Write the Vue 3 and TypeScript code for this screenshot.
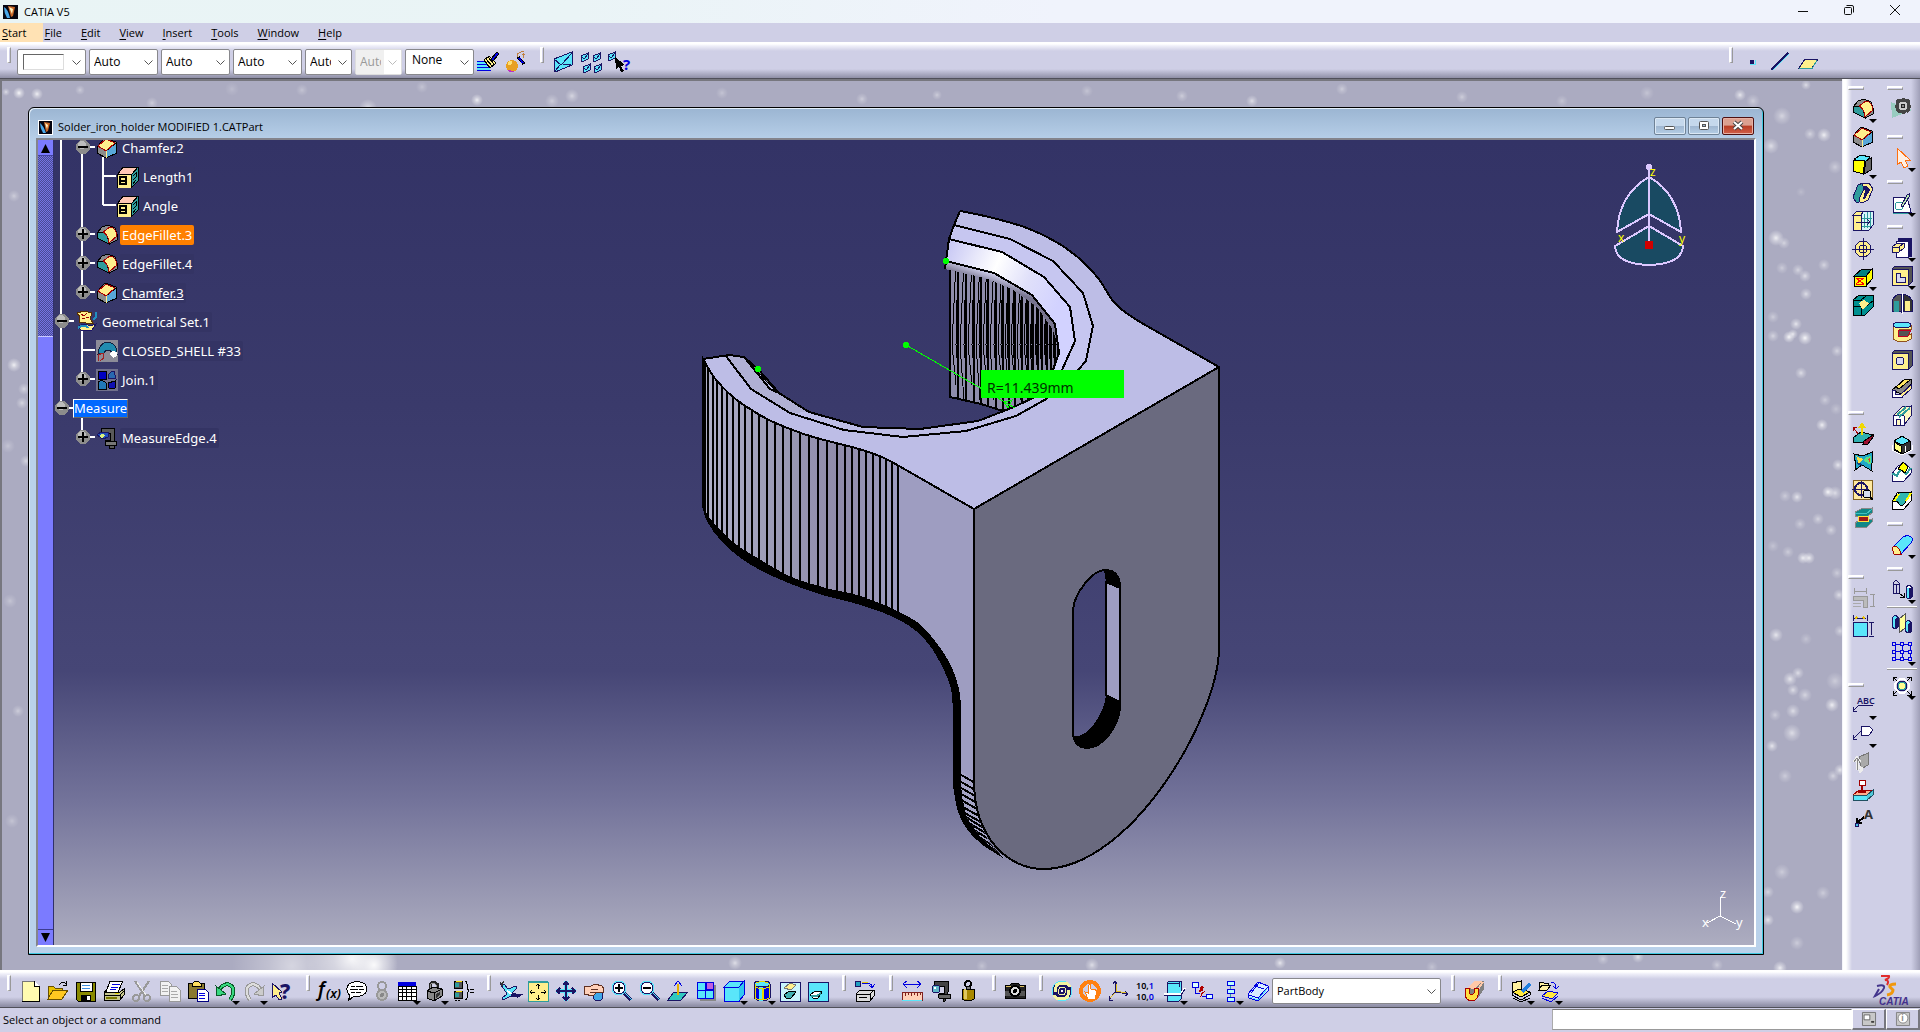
<script setup lang="ts">
interface Tool { n: string; icon: string; drop?: boolean; tight?: boolean; off?: boolean }
interface Combo { id: string; label: string; value: string; cls: string; disabled?: boolean }
interface Row { level: number; icon?: string; text: string; node: 'plus' | 'minus' | 'none'; trunk: boolean; last?: boolean; open?: boolean; mark?: string }

const N = '#1a1464'
const K = '#000'
const Y = '#ffef8c'
const C = '#5ae6fa'
const T = '#2f9c9c'
const B = '#0000e0'

const p = (d: string, fill = 'none', stroke = 'none', w = 1): string =>
  `<path d="${d}" fill="${fill}" stroke="${stroke}" stroke-width="${w}"/>`
const c = (x: number, y: number, r: number, fill = 'none', stroke = 'none', w = 1): string =>
  `<circle cx="${x}" cy="${y}" r="${r}" fill="${fill}" stroke="${stroke}" stroke-width="${w}"/>`
const t = (x: number, y: number, size: number, s: string, fill = K, extra = ''): string =>
  `<text x="${x}" y="${y}" font-size="${size}" fill="${fill}" font-family="Noto Sans, sans-serif" ${extra}>${s}</text>`

const fillet = p('M1 9L6 3L12 1L19 4L21 10V16L13 20L1 14Z', '#8c8c8c', K) + p('M1 9L7 8Q12 10 13 20L1 14Z', T, K) + p('M7 8L14 3Q20 4 21 12L13 19Q12 10 7 8Z', Y, '#a80000')
const chamfer = p('M1 10L9 1L20 5L21 16L10 21L1 16Z', '#8c8c8c', K) + p('M10 14L20 6L21 16L10 21Z', '#58a8d8', K) + p('M2 9L10 2L19 6L10 14Z', Y, '#a80000') + p('M10 14V21', 'none', Y, 1)
const param = p('M1 8L6 1H21V15L15 21', T, K) + p('M1 8L6 1H21L15 8Z', '#ffc8b4', K) + p('M0 8H14V22H0Z', Y, K) + p('M3 11H9V18H3ZM3 14.500H10', 'none', K, 2) + p('M16 10L19 7V11L16 14M16 18L19 14', 'none', K, 1)
const mini = (x: number, y: number): string => p(`M${x} ${y + 3}L${x + 7} ${y}V${y + 6}L${x + 1} ${y + 9}Z`, C, N) + p(`M${x + 1} ${y + 4}L${x + 3} ${y + 6}L${x + 7} ${y + 1}`, 'none', N)

const icons: Record<string, string> = {
  fillet, chamfer, param,
  brush: p('M0 10H9M0 13H11M0 16H13M0 19H14', 'none', B, 1) + p('M0 12H9M0 15H10M0 18H13', 'none', C, 2) + p('M7 9L12 5L19 12L13 17Z', Y, K) + p('M14 8L20 1L22 3L16 10Z', B, K) + p('M9 8L15 15M11 6L17 13', 'none', K),
  wand: c(7, 15, 6, '#e8a020') + p('M2 19Q7 24 12 18L9 20Z', '#c030c0') + c(5, 12, 2, '#ffe070') + p('M13 6L19 13', 'none', K, 3) + p('M14 7L18 12', 'none', B, 2) + p('M12 3L16 1L19 0M17 4L20 3M18 7L19 2M12 6V3', 'none', '#c08040', 1),
  view3d: p('M2 8L20 1V14L3 21Z', C, N) + p('M2 8L9 14L20 2M9 13L3 20M11 13L19 14', 'none', N),
  four: mini(1, 2) + mini(13, 2) + mini(3, 13) + mini(14, 13),
  what: mini(0, 1) + p('M7 6L17 14L13 15L16 20L13 21L11 16L8 18Z', K) + t(15, 19, 15, '?', B, 'font-weight="700"'),
  point: p('M9 9H13V13H9Z', N) + p('M9 13.5H14V9', 'none', C),
  line: p('M2 19L19 2', 'none', N, 2) + p('M4 19L20 3', 'none', C),
  plane: p('M2 17L8 8H21L15 17Z', Y, N) + p('M2 17.5H15L20 9', 'none', T),
  newdoc: p('M3 1H15L20 6V21H3Z', '#fffbb0', '#777') + p('M15 1V6H20', '#fff', K) + p('M20 6V21H3', 'none', K),
  open: p('M1 18V6H6L8 8H15V11', '#e8c000', '#6a5000') + p('M1 19L6 10H21L15 19Z', '#ffc820', '#6a5000') + p('M12 5Q16 0 19 4M19 1V5H16', 'none', K),
  save: p('M1 2H20V21H3L1 19Z', '#8a8a00', K) + p('M5 2H17V11H5Z', '#fff', K) + p('M7 5H15M7 8H15', 'none', '#4090e0') + p('M6 15H16V21H6Z', K) + p('M12 16H15V20H12Z', '#fff'),
  print: p('M7 1H20L15 12H3Z', '#fff', K) + p('M9 4H17M8 7H15M7 9H13', 'none', B) + p('M1 12H17L21 9V15L17 20H1Z', '#c8c890', K) + p('M1 12L4 10M1 15H17V20M17 15L21 11', 'none', K) + p('M3 18H14', 'none', '#7a7a00', 2) + p('M12 13.5H16', 'none', '#e0d000', 1),
  cut: p('M4 1L14 16M18 1L8 16', 'none', '#999', 2) + c(5, 18, 3, 'none', '#999', 2) + c(16, 18, 3, 'none', '#999', 2) + p('M6 2L15 15', 'none', '#eee'),
  copy: p('M1 1H9L12 4V15H1Z', '#f2f2f2', '#999') + p('M3 5H9M3 8H9M3 11H9', 'none', '#aaa') + p('M10 6H17L21 10V21H10Z', '#f2f2f2', '#999') + p('M12 11H18M12 14H19M12 17H19', 'none', '#aaa'),
  paste: p('M1 3H17V18H1Z', '#8a7a30', K) + p('M5 4L8 1H11L14 4V6H5Z', '#ffe060', K) + p('M10 9H18L21 12V21H10Z', '#fff', '#000080') + p('M12 13H18M12 15.5H18M12 18H18', 'none', B),
  undo: p('M3 12Q8 2 15 5Q22 9 15 20', 'none', '#0a5a28', 4) + p('M3 12Q8 2 15 5Q22 9 15 20', 'none', '#38d880', 2) + p('M1 6L2 16L11 14Z', '#38d880', '#0a5a28'),
  redo: p('M19 12Q14 2 7 5Q0 9 7 20', 'none', '#999', 4) + p('M19 12Q14 2 7 5Q0 9 7 20', 'none', '#ddd', 2) + p('M21 6L20 16L11 14Z', '#ccc', '#999'),
  help: p('M1 3L11 12L8 13L11 19L8 20L5 15L1 18Z', Y, N) + t(9, 19, 21, '?', N, 'font-weight="800"'),
  fx: t(0, 16, 19, 'f', K, 'font-style="italic" font-weight="600"') + t(8, 18, 13, '(x)', K, 'font-style="italic" font-weight="600"'),
  bubble: p('M4 16Q-2 9 3 4Q11 -1 19 4Q24 11 17 15Q13 17 8 16L2 21Z', '#fff', K) + p('M5 6H9M10 6H17M4 9H12M13 9H18M5 12H9M10 12H15', 'none', K),
  chain: c(11, 6, 4, 'none', '#999', 2) + c(11, 15, 5, '#bbb', '#999', 2) + c(11, 15, 2, '#888'),
  grid: p('M2 2H20V6H2Z', B) + p('M2 6H20V20H2Z', '#fff', K) + p('M6.5 6V20M10.5 6V20M15.5 6V20M2 9.5H20M2 12.5H20M2 16.5H20', 'none', K),
  lock: p('M6 10V5Q9 0 13 4V10', 'none', '#222', 3) + p('M6 10V5Q9 1 12 5V10', 'none', '#999', 1) + p('M3 11L9 7L18 9V16L10 21L3 18Z', '#888', K) + p('M3 11L10 13V21M10 13L18 9', 'none', K) + p('M12 14L16 12V15L12 18Z', '#333'),
  equiv: p('M2 1H10V8H2ZM2 11H10V18H2Z', '#555', K) + p('M3 3H7V7H3ZM3 13H7V17H3Z', T) + p('M4 1H10M4 11H10', 'none', '#ffe000') + p('M3 20.5H5M6 20.5H8', 'none', K) + p('M13 1Q15 1 15 4V8L17 11L15 13V18Q15 20 13 20', 'none', K) + p('M18 9.500H22M18 12.500H22', 'none', K),
  fly: p('M1 4L5 4L9 9L17 6L18 8L13 13L21 15L18 17L12 16L4 20L3 18L8 14L5 9Z', C, N) + p('M8 11L13 14', 'none', '#fff', 2) + p('M1 2L4 6M5 1L2 6', 'none', '#333') + p('M12 15L21 15L18 17', 'none', N, 2),
  fit: p('M1 2H21V21H1Z', Y, T) + p('M1 2H21', 'none', T, 2) + p('M11 4V9M9 6L11 4L13 6M11 20V15M9 18L11 20L13 18M3 12H8M5 10L3 12L5 14M19 12H14M17 10L19 12L17 14', 'none', K, 1),
  pan: p('M11 1V21M1 11H21', 'none', C, 4) + p('M11 1V21M1 11H21M8 5L11 2L14 5M8 17L11 20L14 17M5 8L2 11L5 14M17 8L20 11L17 14', 'none', N, 2),
  rotate: c(15, 16, 5, '#40a8e8', N) + p('M1 7L8 6L12 4L19 6L21 9L20 13L14 12L10 16L1 14Z', '#ffd0b8', '#603020') + p('M8 9H15M7 12H13M1 7V15', 'none', '#603020'),
  zoomin: p('M12 12L20 20', 'none', N, 4) + p('M13 12L21 20', 'none', C) + c(8, 8, 7, '#fff', C, 1) + c(8, 8, 6, '#fff', N, 1) + p('M4 8H12M8 4V12', 'none', K, 2),
  zoomout: p('M12 12L20 20', 'none', N, 4) + p('M13 12L21 20', 'none', C) + c(8, 8, 7, '#fff', C, 1) + c(8, 8, 6, '#fff', N, 1) + p('M4 8H12', 'none', K, 2),
  normal: p('M1 20L7 12H21L14 20Z', '#30c8c0', N) + p('M11 15V4', 'none', '#e8b000', 2) + p('M7 6L11 1L15 6', 'none', B),
  multi: p('M5 5H21V21H5Z', '#888') + p('M2 2H18V18H2Z', C, B) + p('M11 2H18V9H11Z', '#c060e0', B) + p('M10 2V18M2 10H18', 'none', B),
  iso: p('M1 7L7 1H21L16 7Z', C, B) + p('M1 7H16V21H1Z', C, B) + p('M16 7L21 1V15L16 21', '#30c8f0', B),
  shading: p('M3 4H19V18Q11 24 3 18Z', B, N) + p('M8 7H12V21H8Z', C) + `<ellipse cx="11" cy="4" rx="8" ry="3" fill="${C}" stroke="${N}"/>` + p('M4 4V18M18 4V18M5 3Q11 0 17 3M4 7Q11 10 18 7M4 18Q11 22 18 18', 'none', '#e8d800', 1) + p('M12 9V20', 'none', '#e8d800', 2),
  hide: p('M1 2H21V21H1Z', '#c8f4fc', N, 1) + p('M5 8L11 3L17 5L12 10Z', Y, '#777') + p('M5 15L10 11L17 12L12 18H7Z', '#40b0b0', K),
  swap: p('M1 2H21V21H1Z', C, N, 1) + p('M3 15L8 11L15 12L11 18H6Z', '#fff', K) + p('M4 16H10L14 13', 'none', T, 2),
  applymat: c(4, 4, 3, '#20a0c0', N) + p('M8 3H14Q18 4 18 7M15 5L18 8L21 4', 'none', B) + p('M8 2H14', 'none', '#e8c800', 1) + p('M2 14L6 10H20V16L16 21H2ZM2 14H16V21M16 14L20 10M5 17H13', '#ddd', K),
  ruler: p('M2 4H20M6 1L2 4L6 8M16 1L20 4L16 8', 'none', B) + p('M1 12H21V20H1Z', '#ffd0b8', '#802020') + p('M4 12V16M7 12V15M10 12V16M13 12V15M16 12V16M19 12V15', 'none', '#802020') + p('M1 20.500H21', 'none', C),
  caliper: p('M5 1H19V12L16 21H14V16H10V13H15V6H5Z', '#444', K) + p('M9 14H21V18H10Z', '#666', K) + c(7, 9, 4, '#60b8c8', N) + c(6, 8, 1, '#fff'),
  weight: p('M5 9H17V19Q11 23 5 19Z', '#a88800', K) + p('M7 9H10V19H7Z', '#e0c860') + c(11, 4, 3, 'none', K, 2) + p('M9 6H13V9H9Z', '#777', K),
  camera: p('M1 5H6L8 3H14L16 5H21V18H1Z', '#222', K) + p('M1 11H21V16H1Z', '#555') + c(11, 11, 5, '#ddd', K, 2) + c(11, 11, 2, K) + p('M2 6.500H7M16 6.500H20', 'none', '#ddc060'),
  update: c(11, 11, 10, N, C) + p('M5 12Q3 3 12 3Q17 3 19 7M17 10Q19 19 10 19Q5 19 3 15', 'none', '#f4f4a0', 3) + p('M15 11Q15 7 11 7Q7 7 8 11M7 11Q7 15 11 15Q15 15 14 11', 'none', '#f4f4a0', 1) + p('M10 11H12', 'none', '#fff', 2),
  manip: c(11, 11, 9, 'none', '#ff8010', 4) + p('M9 6V13L6 12L9 19H16L18 12L16 9L14 10L12 9L11 4Z', '#fff', '#ff8010'),
  axis: p('M8 1V12L21 14M8 12L2 20M6 4L8 1L10 4M18 11L21 14L18 16M2 16V20H6', 'none', N) + p('M9 4V11L19 13M8 13L3 18', 'none', '#e0c020'),
  meandim: t(1, 9, 9, '10,<tspan fill="#0000e0">1</tspan>', K, 'font-weight="600"') + t(1, 20, 9, '10,<tspan fill="#0000e0">0</tspan>', K, 'font-weight="600"'),
  section: p('M4 3L6 1H18V19L16 21H4Z', C, N) + p('M1 14H18L22 8', 'none', '#fff', 2) + p('M4 3H16L18 1M1 15H18L22 9M16 3V7', 'none', N),
  cutlink: p('M1 2H7V7H1ZM15 14H21V18H15Z', '#dff', B) + p('M4 8V13H9M11 16H15', 'none', B) + p('M10 6L8 12L11 11L9 18L14 11L11 12L13 7Z', '#b00000'),
  listpb: p('M8 1H15V5H8ZM8 9H15V13H8ZM8 17H15V21H8Z', '#bff', B) + p('M11.500 6V9M11.500 14V17', 'none', T),
  body: p('M1 14L11 2L21 6V11L11 21L2 18Z', '#d8ecff', B) + p('M2 15L11 18L21 7M4 13L12 3M8 6L17 9M11 18V21', 'none', B) + p('M3 17L11 20L20 9', 'none', C),
  rib: p('M6 9L13 1H21V9L15 18H6Z', '#808080') + p('M4 8L12 1H19L11 9Z', '#ffc8a8') + p('M15 9L20 2', 'none', '#ffc8a8', 2) + p('M2 8H6V13Q8 16 11 13V8H15V15Q14 21 8 21Q3 20 2 15Z', '#ffe040', '#a80000', 1),
  catalog: p('M2 3L11 1V9L2 12Z', '#fff0a0', K) + p('M2 12L10 9L20 12L11 17Z', '#ffe840', K) + p('M2 15L11 20L20 15M2 12V15M20 12V15M3 18L11 22L20 18', 'none', K) + p('M12 12L20 4', 'none', '#2080e0', 3),
  folderlink: p('M1 10V2H5L6 3H10V5M1 10L4 5H13L9 10Z', '#fff0a0', K) + p('M13 2Q18 2 18 8M15 6L18 9L21 6', 'none', B) + p('M4 16L10 11L20 13L14 19Z', '#ffe840', B) + p('M4 18L13 22L20 16', 'none', B),
  draft: p('M2 5L9 1L18 3L15 7L6 8Z', C, K) + p('M2 6L13 7L11 20L1 17Z', '#ffff00', K) + p('M14 7L19 4V16L12 20Z', '#666', K),
  shell: p('M1 15L6 3L11 1L13 4L7 20H4Z', T, N) + p('M10 1H17L21 7L16 18L12 20H8L7 17L12 7Z', Y, N) + p('M11 4H15L18 8L13 17H11L13 9Z', N),
  thick: p('M1 5H9V20H1Z', Y, N) + p('M1 5L5 1H12L9 5Z', Y, N) + p('M9 5L12 1H21V15L17 20H9Z', '#d8f4fa', N) + p('M12 4V18M15 2V18M18 2V17M10 8H20M10 16H19', 'none', T, 1) + p('M4 12H18M15 9L18 12L15 15', 'none', N),
  target: c(11, 11, 8, Y, N, 1) + c(11, 11, 4, 'none', N) + p('M11 0V22M0 11H22', 'none', N),
  remface: p('M2 10L10 3H20L14 10Z', '#008080', K) + p('M14 10L20 3V13L14 20Z', '#ffff00', K) + p('M2 10H14V20H2Z', '#ffff00', K) + p('M4 12H12M4 18H12M4 12L12 18M12 12L4 18', 'none', '#f00', 1),
  repface: p('M1 6L7 1H21V13L13 21H1Z', '#009090', K) + p('M1 6H9V12H1M9 12V21M14 12L21 7M9 6L14 2', 'none', K) + p('M7 9L12 6L17 9L12 15H10Z', Y),
  draftan: p('M1 15L9 9L21 12L15 20L1 19Z', '#30b0b0', K) + p('M12 18L21 12V14L16 21H11Z', '#a01030', K) + p('M10 12V2M7 5L10 1L13 5', 'none', '#f0d800', 2) + p('M6 11L1 4M1 8V4H5', 'none', '#a00000'),
  curvan: p('M2 3L11 5L20 1V12Q19 17 20 20L10 14L3 19Q4 11 2 3Z', '#20a8c8', K) + p('M4 5L11 8L7 13Z', '#ffe040') + p('M14 6L19 5V13Q15 13 12 9Z', '#60e080') + p('M16 8L18 7V12Z', '#e04020') + p('M5 12L10 14', 'none', '#104080', 2),
  tapan: p('M1 1H20V20H1Z', '#ffe9a0', '#806020') + c(9, 10, 6, 'none', N, 2) + p('M0 10H17M9 2V19', 'none', N) + c(15, 15, 4, '#d8e0f0', K) + p('M18 18L21 21', 'none', K, 2),
  wallan: p('M3 5L9 2L20 1V6L16 9H3ZM3 16L8 13L20 12V15L15 20H3Z', '#108888', '#888') + p('M6 9H16V14H6Z', '#a01818', '#ffe040', 1) + p('M3 6L14 7L20 2', 'none', '#40c0c0'),
  constoff: p('M2 4H14M2 1V7M14 1V7M21 7V19M18 7H23M18 19H23', 'none', '#999') + p('M1 9H15V20H11V13H1Z', '#bbb', '#999') + p('M1 16H9M1 19H9', 'none', '#aaa'),
  constr: p('M1 7H15V21H1Z', C, N, 1) + p('M2 3H14M1 0V6M15 0V6M19 8V20M17 7H22M17 21H22', 'none', N) + p('M3 4L5 2M13 4L11 2', 'none', '#e8c000', 2),
  abc: t(5, 9, 9, 'ABC', N, 'font-weight="600"') + p('M6 10.500H21M6 11L1 16M1 12V16H5', 'none', N),
  flagnote: p('M9 3H17L21 7L17 12H9Z', '#fff', N) + p('M9 8L1 16M1 12V16H5', 'none', N),
  noteface: p('M7 6L16 2V14L9 18Z', '#aaa', '#777') + p('M5 19V8M2 11L5 7L8 11M5 14L10 18M7 21L11 18', 'none', '#eee', 3) + p('M5 19V8M2 11L5 7L8 11', 'none', '#888'),
  stamp: p('M1 16L7 11H21L15 18H1Z', '#ffb090', '#a00000') + p('M1 16H15V21H1Z', C, '#205060') + p('M15 16L21 11V16L15 21', '#50c8d8', '#205060') + p('M7 1H13V6H7Z', '#fff', '#a00000', 1) + p('M10 6V12M6 13H14', 'none', '#a00000', 2),
  textlead: t(12, 12, 13, 'A', '#333', 'font-weight="700"') + p('M12 10L6 15M5 11V16H10', 'none', K, 2) + p('M3 16H6V19H3Z', '#40c0e0', N),
  gear: p('M0 4L21 12L1 20Z', '#98ccc0') + c(12, 8, 6, '#ccc', '#444', 3) + c(12, 8, 2, '#888', '#222') + p('M12 0V2M12 14V16M4 8H6M18 8H20M6 2L8 4M16 12L18 14M18 2L16 4M6 14L8 12', 'none', '#444', 3),
  select: p('M6 1V18L10 15L13 21L17 19L14 13H19Z', '#fff0e4', '#ff7010'),
  sketch: p('M2 5H16L20 20H2Z', '#fff', N) + c(8, 14, 4, 'none', T) + p('M10 14L16 3L18 2L18 5L12 15Z', '#b8e8b0', N) + p('M2 21H21', 'none', T),
  pad: p('M7 1H21V20H7Z', N) + p('M5 4H17V20H5Z', '#fff', N) + p('M1 10L6 6H13V11L8 15H1Z', Y, N) + p('M1 10H8V15M8 10L13 6', 'none', N),
  pocket: p('M1 4L4 1H21V17L18 20H1Z', '#555', N) + p('M1 4H17V20H1Z', Y, N) + p('M5 8H9V12H14V17H5Z', '#d8d8f0', N, 1),
  shaft: p('M1 7Q5 1 10 1V19L1 18Z', '#555', N) + p('M12 1Q18 2 21 7V18H12Z', '#333', N) + p('M3 8H8V19H3Z', T) + p('M14 8H19V18H14Z', Y) + p('M11 0V21', 'none', '#fff', 1),
  groove: p('M2 4V18Q11 24 20 18V13L14 15H8V8H20V4Z', Y, '#905020') + `<ellipse cx="11" cy="4" rx="9" ry="3" fill="${C}" stroke="${N}"/>` + p('M7 9H20L17 15H7Z', '#555', '#c00020'),
  hole: p('M1 4L4 1H21V17L18 20H1Z', '#555', N) + p('M1 4H17V20H1Z', Y, N) + c(9, 12, 4, '#d8d8f0', N, 1),
  ribt: p('M1 13L14 2H20V7L10 17Z', '#888', K) + p('M5 10L14 2L19 3L8 12Z', '#ffe860', K) + p('M1 13H4V17H11V20H1Z', '#fff', N) + p('M11 20L20 12V8L10 17', Y, N),
  slot: p('M2 11L11 2L20 1V11L13 20H2Z', '#fff8c0', N) + p('M2 11V20H5V14H9V20H13V11L9 10Z', '#fff', N) + p('M8 12L19 3M6 10L15 2', 'none', T, 2),
  stiff: p('M3 8L11 4L19 8V17L11 21L3 17Z', '#333', K) + p('M3 8L11 3L19 8L11 12Z', C, K) + p('M3 9L10 13V20L3 16Z', '#ffff80', K) + p('M1 12V17L11 22L21 17V12M14 13V19', 'none', '#fff'),
  multipad: p('M1 13L7 5L14 2L20 8V12L13 20H1Z', '#fff', N) + p('M1 13L6 14L10 8L15 13L20 7M6 14V16', 'none', T, 2) + p('M7 8L12 1L17 6L14 12L10 9Z', '#ffff00', K) + p('M1 15V20H13L20 13', 'none', N),
  remloft: p('M1 13L6 4L20 3V12L13 20H1Z', '#fff', K) + p('M2 12L8 4L20 3L14 14Q10 20 6 12Z', '#30b8b0', K) + p('M3 12L8 5M15 12L20 4', 'none', '#ffff00', 2),
  loft: p('M1 14L12 3Q18 0 21 4Q22 7 20 9L10 20Z', C, B) + p('M1 14Q4 11 7 14Q10 17 10 20H3Z', Y, '#a00000'),
  translate: p('M2 4L5 1L8 4V14H2Z', 'none', N) + p('M2 5H8M5 5V14', 'none', N) + p('M8 14L13 18M9 18H13V14', 'none', K, 1) + p('M15 8L18 6L21 8V18L18 20L15 18Z', '#fff', N) + p('M16 9H18V19H16Z', C) + p('M18 9L21 8V18L18 20Z', N),
  mirror: p('M1 5L4 2L7 4V14L4 16L1 14Z', C, N) + p('M4 6L7 4V14L4 16Z', N) + p('M8 6L14 1V15L8 20Z', '#ffff98', '#555') + p('M14 10L17 7L20 9V19L17 20L14 18Z', C, N) + p('M17 11L20 9V19L17 20Z', N),
  pattern: p('M3 3H19M3 10.500H19M3 18H19M4 3V19M11.500 3V19M19 3V19', 'none', B) + [3, 11, 19].map(x => [3, 11, 18].map(y => c(x, y, 2, '#cfcfe6', B)).join('')).join(''),
  scale: c(11, 11, 7, 'none', '#fff', 2) + c(11, 11, 5, T, N) + c(11, 11, 3, '#ffff90') + p('M2 2L6 6M2 6V2H6M20 2L16 6M20 6V2H16M2 20L6 16M2 16V20H6M20 20L16 16M20 16V20H16', 'none', K),
  geoset: p('M1 2L8 0L16 2L14 8L18 13L10 12L3 11L4 6Z', Y, '#5a3000') + p('M5 3L8 5L11 2M10 7L13 6M6 7L9 8', 'none', '#a00000', 1) + p('M2 16Q8 11 14 15L20 13L16 19L6 20Z', Y, N) + p('M2 17Q8 12 12 17M20 1V6L17 9', 'none', '#2090c0', 2),
  closed: p('M0 0H22V22H0Z', '#8c8c98') + p('M2 14Q3 2 13 2Q21 4 21 14L17 13Q11 7 8 13Z', '#208cb0', '#102040') + p('M2 21V15L7 13L8 18L4 21', 'none', '#a02020', 1) + p('M13 14L17 18L21 16V12L16 11Z', '#fff'),
  join: p('M0 0H22V22H0Z', '#70708c') + p('M2 2H10V10H2Z', '#0000c0', K) + p('M12 9Q12 3 18 2L20 10Z', '#2868b0', N) + p('M2 13Q6 10 10 14V20H2Z', '#2078b8', K) + p('M12 14L19 12V19Q14 21 12 18Z', '#1010b0', K),
  medge: p('M5 1H18V21H13V17H9V13H14V6H5Z', '#5a5a5a', K) + p('M9 14H20V18H9Z', '#777', K) + p('M1 8L5 5H12V10L7 12Z', '#2050c0', N) + p('M3 9L6 7L9 8L6 11Z', '#d8f080'),
  dock: p('M3 3H19V19H3Z', '#c8c8c8', '#666') + p('M5 6H12V12H5Z', '#fff', '#555') + p('M14 14H17V15H14Z', '#333', '#333'),
  info: p('M3 3H19V19H3Z', '#c8c8c8', '#777') + c(11, 10, 6, '#fff', '#777') + t(9, 14, 10, 'i', '#888', 'font-weight="700"'),
}

const combos: Combo[] = [
  { id: 'fill', label: 'Fill colour', value: '', cls: 'swatch' },
  { id: 'opacity', label: 'Opacity', value: 'Auto', cls: '' },
  { id: 'weight', label: 'Line weight', value: 'Auto', cls: '' },
  { id: 'type', label: 'Line type', value: 'Auto', cls: '' },
  { id: 'symbol', label: 'Point symbol', value: 'Auto', cls: 'narrow' },
  { id: 'render', label: 'Rendering', value: 'Auto', cls: 'narrow off', disabled: true },
  { id: 'layer', label: 'Layer', value: 'None', cls: 'raised' },
]
const tools = (s: string): Tool[] => s.split(' ').map(w => ({
  n: w.replace(/[*~]/g, ''), icon: icons[w.replace(/[*~]/g, '')], drop: w.includes('*'), tight: w.includes('~'),
}))
const menus = ['Start', 'File', 'Edit', 'View', 'Insert', 'Tools', 'Window', 'Help']
const topA = tools('brush wand')
const topB = tools('view3d four what')
const topC = tools('point line plane')
const bottomA = [
  tools('newdoc open save print cut copy paste undo* redo* help'),
  tools('fx bubble chain~ grid* lock* equiv'),
  tools('fly fit pan rotate zoomin zoomout normal multi iso* shading* hide swap'),
  tools('applymat'), tools('ruler caliper weight'), tools('camera'),
  tools('update manip axis meandim section* cutlink listpb* body'),
]
const bottomB = [tools('rib'), tools('catalog* folderlink*')]
const dockA = [
  { gap: '', list: tools('fillet* chamfer draft* shell thick target remface* repface') },
  { gap: 'gap-xl', list: tools('draftan curvan tapan wallan') },
  { gap: 'gap-l', list: tools('constoff constr') },
  { gap: 'gap-l', list: tools('abc* flagnote* noteface stamp textlead') },
]
const dockB = [
  { gap: '', list: tools('gear') },
  { gap: 'gap-m', list: tools('select*') },
  { gap: '', list: tools('sketch*') },
  { gap: '', list: tools('pad* pocket* shaft groove hole ribt slot stiff* multipad remloft') },
  { gap: '', list: tools('loft*') },
  { gap: '', list: tools('translate* | mirror pattern* | scale*') },
]

const rows: Row[] = [
  { level: 1, icon: 'chamfer', text: 'Chamfer.2', node: 'minus', trunk: true, open: true },
  { level: 2, icon: 'param', text: 'Length1', node: 'none', trunk: true },
  { level: 2, icon: 'param', text: 'Angle', node: 'none', trunk: true, last: true },
  { level: 1, icon: 'fillet', text: 'EdgeFillet.3', node: 'plus', trunk: true, mark: 'hot' },
  { level: 1, icon: 'fillet', text: 'EdgeFillet.4', node: 'plus', trunk: true },
  { level: 1, icon: 'chamfer', text: 'Chamfer.3', node: 'plus', trunk: true, last: true, mark: 'under' },
  { level: 0, icon: 'geoset', text: 'Geometrical Set.1', node: 'minus', trunk: true, open: true },
  { level: 1, icon: 'closed', text: 'CLOSED_SHELL #33', node: 'none', trunk: true },
  { level: 1, icon: 'join', text: 'Join.1', node: 'plus', trunk: true, last: true },
  { level: 0, text: 'Measure', node: 'minus', trunk: true, last: true, open: true, mark: 'sel' },
  { level: 1, icon: 'medge', text: 'MeasureEdge.4', node: 'plus', trunk: false, last: true },
]
const guide = (r: Row): string => {
  const x = r.level * 21 + 7
  let d = `M${x} 0V${r.last ? 14 : 29}M${x} 14H${x + 13}`
  if (r.trunk && r.level > 0) d += 'M7 0V29'
  if (r.level === 2) d += 'M28 0V29'
  if (r.open) d += `M${x + 21} 22V29`
  return d
}

// Catmull-Rom curve through "x y x y ..." written as cubic segments; starts with the bare first point.
const curve = (s: string): string => {
  const v = s.split(' ').map(Number)
  const at = (i: number): [number, number] => {
    const k = Math.max(0, Math.min(v.length / 2 - 1, i))
    return [v[k * 2], v[k * 2 + 1]]
  }
  let d = `${v[0]} ${v[1]}`
  for (let i = 0; i < v.length / 2 - 1; i++) {
    const [a, b, e, f] = [at(i - 1), at(i), at(i + 1), at(i + 2)]
    d += `C${b[0] + (e[0] - a[0]) / 6} ${b[1] + (e[1] - a[1]) / 6} ${e[0] - (f[0] - b[0]) / 6} ${e[1] - (f[1] - b[1]) / 6} ${e[0]} ${e[1]}`
  }
  return d
}

const wallX = [703, 705, 708, 713, 717, 722, 727, 733, 739, 745, 752, 759, 767, 775, 783, 791, 800, 809, 818, 827, 837, 845, 852, 859, 866, 873, 880, 886, 892, 898]
const wallLines = wallX.map(x => `M${x} 350V620`).join('')
const boreX = [950, 958, 966, 974, 981, 988, 996, 1003, 1009, 1015, 1022, 1028, 1033, 1038, 1042, 1047, 1051, 1055]
const boreLines = boreX.map(x => `M${x} 262V415`).join('')
const boreFacets = boreX.map((x, i) => `M${x + 6} 262L${x + 2} 345L${x + 6} ${i % 2 ? 400 : 385}M${x - 1} 300L${x - 2} 345L${x} 370`).join('')
const ridges = [774, 781, 787, 793, 799, 805, 810, 815, 819, 823, 827, 830, 833, 836, 839, 842, 845].map((y, i) => `M956 ${y - 2 - (i > 6 ? 2 : 0)}L1000 ${y + 23}`).join('')
const outer = 'M' + curve('960 211 989 217 1027 228 1058 243 1081 260 1098 278 1113 301 1125 312 1140 322') + 'L1219 367'
const rim = 'L' + curve('899 466 882 457 859 449 840 444 813 437 790 429 769 420 750 409 733 397 717 381 710 371 703 359')
const stripTop = curve('703 508 709 518 717 527 736 545 760 560 790 577 824 588 855 595 878 603 898 612 920 625 939 647 951 667 958 687 960 700') + 'L' + curve('960 777 962 797 968 817 981 837 1004 858')
const stripLow = curve('1004 858 981 843 966 827 958 810 953 783') + 'L' + curve('953 703 951 687 943 667 930 645 913 628 890 615 859 604 821 594 790 583 763 571 740 557 721 540 708 522 703 508')
const faceD = 'M974 509L1219 367V650C1217 720 1130 869 1043 869C1010 869 974 840 974 780Z'
const slotD = 'M1073 610C1074 594 1092 570 1105 570Q1120 570 1120 588V707C1119 727 1102 748 1087 748Q1073 747 1073 732Z'

const stars: [number, number, number, number][] = [
  [4, 11, 4, 6], [17, 12, 6, 9], [35, 13, 6, 8], [78, 9, 5, 4], [150, 22, 6, 4], [230, 8, 7, 2], [300, 9, 6, 3], [420, 6, 6, 3], [475, 19, 6, 8], [550, 20, 7, 4], [570, 15, 7, 5], [366, 27, 9, 6], [720, 12, 6, 3], [860, 18, 6, 4], [935, 14, 5, 4], [1085, 10, 6, 3], [1180, 15, 6, 4], [1250, 20, 6, 6], [1340, 8, 6, 4], [1460, 16, 6, 4], [1560, 20, 6, 3], [1645, 12, 7, 3], [1738, 14, 6, 7], [1751, 20, 7, 4], [1804, 4, 5, 6],
  [12, 115, 6, 4], [12, 284, 7, 8], [22, 308, 6, 5], [20, 322, 6, 5], [6, 365, 7, 3], [24, 380, 6, 5], [8, 520, 7, 3], [16, 630, 6, 4], [10, 740, 7, 3],
  [1780, 35, 9, 5], [1808, 53, 6, 5], [1822, 54, 7, 8], [1769, 65, 8, 6], [1833, 86, 7, 4], [1799, 111, 5, 2], [1774, 157, 8, 8], [1782, 162, 6, 5], [1780, 187, 6, 4], [1796, 189, 6, 5], [1803, 195, 6, 6], [1822, 184, 6, 5],
  [1804, 213, 6, 6], [1771, 236, 6, 4], [1794, 243, 6, 7], [1771, 255, 6, 5], [1787, 256, 6, 9], [1791, 253, 5, 7], [1803, 257, 7, 9], [1835, 270, 6, 5], [1799, 292, 6, 6], [1823, 319, 6, 4], [1834, 328, 6, 3], [1820, 344, 6, 8], [1836, 384, 6, 7], [1783, 415, 6, 4], [1795, 416, 6, 7], [1826, 411, 6, 9], [1833, 412, 7, 6], [1816, 438, 6, 5], [1798, 443, 6, 4], [1829, 449, 6, 5], [1771, 465, 6, 3], [1786, 471, 6, 4], [1801, 477, 6, 8], [1807, 477, 6, 8], [1835, 492, 6, 4], [1837, 514, 6, 6], [1774, 554, 7, 7], [1804, 558, 6, 3], [1838, 550, 6, 5], [1796, 592, 6, 6], [1788, 598, 7, 7], [1833, 600, 9, 4], [1791, 609, 6, 6], [1803, 614, 7, 5], [1830, 624, 7, 8], [1791, 630, 7, 6], [1773, 634, 6, 4], [1790, 652, 9, 6], [1770, 665, 6, 7], [1838, 689, 6, 7], [1831, 695, 6, 5], [1783, 695, 7, 4],
  [1780, 791, 8, 4], [1766, 811, 6, 5], [1795, 826, 7, 9], [1766, 839, 6, 7], [1821, 812, 7, 4], [1795, 862, 7, 4], [1778, 887, 7, 8], [1601, 878, 6, 4], [1636, 876, 6, 6], [1715, 884, 6, 4],
  [290, 885, 60, 5], [350, 878, 46, 9], [372, 884, 24, 9], [733, 882, 7, 6], [1090, 884, 7, 6], [1278, 882, 6, 7], [980, 885, 6, 3], [1430, 886, 6, 3],
]
</script>

<template>
  <div class="app">
    <header class="caption">
      <svg class="ico" width="15" height="14" viewBox="0 0 15 14" aria-hidden="true"><rect width="15" height="14" fill="#050510" /><path d="M1 2Q5 4 7 13L4 13Q1 8 1 2Z" fill="#4aa8e8" /><path d="M5 1L12 2L10 11L8 12Z" fill="#c86828" /><path d="M6 2L10 4L9 9Z" fill="#fff2c0" /></svg>
      <span class="grow">CATIA V5</span>
      <button class="sys" aria-label="Minimize"><svg width="14" height="14"><path d="M2 8.500H12" stroke="#111" /></svg></button>
      <button class="sys" aria-label="Restore"><svg width="14" height="14" fill="none" stroke="#111"><rect x="2.500" y="4.500" width="7" height="7" rx="1" /><path d="M4.500 2.500H10Q11.500 2.500 11.500 4V9.500" /></svg></button>
      <button class="sys" aria-label="Close"><svg width="14" height="14"><path d="M2 2L12 12M12 2L2 12" stroke="#111" /></svg></button>
    </header>

    <nav class="menu">
      <a v-for="(m, i) in menus" :key="m" href="#" :class="{ current: i === 0 }"><u>{{ m[0] }}</u>{{ m.slice(1) }}</a>
    </nav>

    <div class="bar">
      <i class="grip first" />
      <div class="combos">
        <label v-for="s in combos" :key="s.id" class="combo" :class="s.cls">
          <select :aria-label="s.label" :disabled="s.disabled"><option>{{ s.value }}</option></select>
          <i v-if="!s.value" class="chip" />
          <svg class="chev" width="9" height="6"><path d="M0.500 0.500L4.500 4.500L8.500 0.500" fill="none" stroke="currentColor" /></svg>
        </label>
      </div>
      <button v-for="x in topA" :key="x.n" class="tool" :aria-label="x.n"><svg viewBox="0 0 22 22" v-html="x.icon" /></button>
      <i class="grip" />
      <button v-for="x in topB" :key="x.n" class="tool" :aria-label="x.n"><svg viewBox="0 0 22 22" v-html="x.icon" /></button>
      <span class="grow" />
      <i class="grip" />
      <button v-for="x in topC" :key="x.n" class="tool" :aria-label="x.n"><svg viewBox="0 0 22 22" v-html="x.icon" /></button>
      <span class="tail" />
    </div>

    <div class="middle">
      <main class="desk">
        <svg class="sky" aria-hidden="true">
          <defs><radialGradient id="star"><stop offset="0" stop-color="#fff" /><stop offset="0.400" stop-color="#fff" stop-opacity="0.500" /><stop offset="1" stop-color="#fff" stop-opacity="0" /></radialGradient></defs>
          <circle v-for="(s, i) in stars" :key="i" :cx="s[0]" :cy="s[1]" :r="s[2]" fill="url(#star)" :opacity="s[3] / 10" />
        </svg>
        <section class="window">
          <div class="wtitle">
            <svg class="ico" width="15" height="15" viewBox="0 0 15 15" aria-hidden="true"><rect width="15" height="15" fill="#fff" /><rect x="1" y="1" width="13" height="13" fill="#050510" /><path d="M2 3Q5 5 8 13L5 13Q2 8 2 3Z" fill="#4aa8e8" /><path d="M6 2L12 3L10 11L8 12Z" fill="#c86828" /><path d="M7 3L10 5L9 9Z" fill="#fff2c0" /></svg>
            <span class="grow">Solder_iron_holder MODIFIED 1.CATPart</span>
            <button class="wbtn" aria-label="Minimize document"><svg width="16" height="12"><rect x="2.500" y="6.500" width="10" height="3" rx="1" fill="#fff" stroke="#555" /></svg></button>
            <button class="wbtn" aria-label="Maximize document"><svg width="16" height="12"><rect x="3.500" y="1.500" width="9" height="8" rx="1" fill="#fff" stroke="#555" /><rect x="6.500" y="4.500" width="3" height="2" fill="#9db8d4" stroke="#555" /></svg></button>
            <button class="wbtn red" aria-label="Close document"><svg width="16" height="12"><path d="M4 2L12 9M12 2L4 9" stroke="#444" stroke-width="4" /><path d="M4 2L12 9M12 2L4 9" stroke="#fff" stroke-width="2" /></svg></button>
          </div>
          <div class="client">
            <div class="scroll">
              <button aria-label="Scroll up"><svg width="9" height="10"><path d="M0 10L4.500 1L9 10Z" /></svg></button>
              <span class="track" />
              <span class="thumb" />
              <button aria-label="Scroll down"><svg width="9" height="10"><path d="M0 0L4.500 9L9 0Z" /></svg></button>
            </div>
            <div class="view">
              <svg class="model" viewBox="54 140 1700 805" shape-rendering="crispEdges" role="img" aria-label="Part body">
                <defs>
                  <linearGradient id="wall" gradientUnits="userSpaceOnUse" x1="703" y1="0" x2="900" y2="0"><stop offset="0" stop-color="#b0b0c8" /><stop offset="0.350" stop-color="#9c9cb8" /><stop offset="0.700" stop-color="#8f8ba9" /><stop offset="1" stop-color="#9e9dc1" /></linearGradient>
                  <linearGradient id="shine" gradientUnits="userSpaceOnUse" x1="946" y1="250" x2="1060" y2="300"><stop offset="0" stop-color="#c8c8f4" /><stop offset="0.420" stop-color="#ffffff" /><stop offset="0.700" stop-color="#e0e0fa" /><stop offset="1" stop-color="#d2d2ff" /></linearGradient>
                  <linearGradient id="lip" gradientUnits="userSpaceOnUse" x1="980" y1="268" x2="976" y2="280"><stop offset="0" stop-color="#d8d8f4" /><stop offset="1" stop-color="#77748e" /></linearGradient>
                  <clipPath id="wallclip"><path :d="'M974 509' + rim + 'L' + stripTop + 'L974 780Z'" /></clipPath>
                  <clipPath id="boreclip"><path d="M950 268L985 276L1012 288L1037 307L1055 330L1059 353L1056 372L1046 396L1015 407L1003 411L981 404L950 397Z" /></clipPath>
                  <clipPath id="ridgeclip"><path d="M959 770L974 780L975 800L980 823L989 842L1004 858L981 838L967 818L961 797Z" /></clipPath>
                </defs>

                <g clip-path="url(#boreclip)">
                  <path d="M940 250H1070V420H940Z" fill="#8f8dab" />
                  <path :d="boreLines" fill="none" stroke="#000" stroke-width="2" />
                  <path :d="boreFacets" fill="none" stroke="#000" />
                </g>
                <path d="M950 268V397L981 404L1003 411L1015 407" fill="none" stroke="#000" stroke-width="2" />

                <path :d="outer + 'L974 509' + rim + 'L729 355L744 357L758 369L779 393L809 412L863 427L920 429L978 421L1014 407L1043 393L1056 370L1061 353L1055 324L1034 297L994 275L946 262L945 268L949 239L954 225Z'" fill="#bdbde6" />
                <path d="M949 239L1002 252L1044 277L1070 307L1075 341L1062 370L1054 370L1059 353L1055 324L1032 295L994 273L946 261Z" fill="url(#shine)" />
                <path d="M954 225L1010 239L1053 261L1083 293L1093 326L1086 361L1078 370H1062L1075 341L1070 307L1044 277L1002 252L949 239Z" fill="#c6c6f0" />
                <path d="M946 261L994 273L1032 295L1055 324L1058 345L1053 330L1037 307L1012 289L985 278L945 269Z" fill="url(#lip)" />
                <path d="M726 356L744 357L770 389L779 393L809 412L790 413L751 389Z" fill="#b0b0d4" />
                <path d="M746 359L758 369L780 394L769 384Z" fill="#77778c" stroke="#000" />
                <path :d="'M974 509' + rim + 'L' + stripTop + 'L989 842L975 800L974 780Z'" fill="url(#wall)" />
                <path :d="wallLines" fill="none" stroke="#000" stroke-width="2" clip-path="url(#wallclip)" />
                <path :d="'M' + stripTop + 'L' + stripLow + 'Z'" fill="#000" stroke="#000" />
                <path d="M961 771L974 780L975 800L980 823L989 842L1004 858L981 838L967 818L962 797Z" fill="#a5a4c6" />
                <path :d="ridges" fill="none" stroke="#000" stroke-width="2" clip-path="url(#ridgeclip)" />

                <path :d="faceD + slotD" fill="#6a6a7f" fill-rule="evenodd" stroke="#000" stroke-width="2" stroke-linejoin="round" />
                <path d="M1106 582L1120 588V702L1106 695Z" fill="#9e9dc1" stroke="#000" stroke-width="2" />
                <path d="M1104 570Q1120 570 1120 588L1106 582Z" fill="#000" />
                <path d="M1106 695L1120 702V707C1119 727 1102 748 1087 748Q1074 747 1073 736Q1084 738 1094 724Q1104 711 1106 695Z" fill="#000" />

                <g fill="none" stroke="#000" stroke-width="2">
                  <path :d="outer + 'L974 509' + rim + 'V508'" />
                  <path d="M960 211L954 225L949 239L946 261L945 269" />
                  <path d="M703 359L729 355L744 357L758 369L779 393L809 412L863 427L920 429L978 421L1014 407L1043 393" />
                  <path d="M726 356L751 389L790 413L844 430L903 437L966 431L1016 416L1048 398" />
                  <path d="M744 357L770 389L779 393" />
                  <path d="M954 225L1010 239L1053 261L1083 293L1093 326L1086 361L1078 370" />
                  <path d="M949 239L1002 252L1044 277L1070 307L1075 341L1062 370" />
                  <path d="M946 261L994 273L1032 295L1055 324L1059 353L1053 370" />
                </g>
                <g class="lime">
                  <path d="M906 345L1015 408M1004 402L1012 400L1008 408Z" fill="none" stroke="#0f0" />
                  <circle cx="906" cy="345" r="3" /><circle cx="946" cy="261" r="3" /><circle cx="758" cy="369" r="3" />
                  <rect x="981" y="370" width="143" height="28" />
                </g>
                <text x="987" y="393" class="dim">R=11.439mm</text>
              </svg>

              <ul class="tree">
                <li v-for="r in rows" :key="r.text">
                  <svg class="guide" :class="'g' + r.level" height="29" shape-rendering="crispEdges">
                    <path :d="guide(r)" fill="none" stroke="#fff" stroke-width="2" />
                    <g v-if="r.node !== 'none'" :transform="'translate(' + (r.level * 21 + 8) + ' 14)'">
                      <circle r="7" fill="#8c8c8c" /><circle r="4" cx="-1" cy="-2" fill="#bcbcbc" />
                      <path :d="r.node === 'plus' ? 'M-5 0H5M0 -5V5' : 'M-5 0H5'" stroke="#000" stroke-width="2" />
                    </g>
                  </svg>
                  <svg v-if="r.icon" class="ticon" viewBox="0 0 22 22" shape-rendering="crispEdges" v-html="icons[r.icon]" />
                  <span class="label" :class="r.mark">{{ r.text }}</span>
                </li>
              </ul>

              <svg class="compass" width="80" height="110" viewBox="1609 160 80 110" shape-rendering="crispEdges" aria-label="Compass">
                <g fill="#194a62" stroke="#dcc8ff" stroke-width="2">
                  <path d="M1649 177Q1619 194 1617 232L1649 214L1681 232Q1679 194 1649 177Z" />
                  <path d="M1649 226L1615 246Q1616 264 1649 265Q1682 264 1683 246Z" />
                  <path d="M1649 168V242" />
                </g>
                <circle cx="1649" cy="167" r="3" fill="#dcc8ff" />
                <rect x="1645" y="241" width="8" height="8" fill="#d00000" />
                <g fill="#ffff00" font-family="Noto Sans, sans-serif" font-size="12"><text x="1650" y="176">z</text><text x="1618" y="242">x</text><text x="1679" y="243">y</text></g>
              </svg>
              <svg class="triad" width="50" height="60" viewBox="1698 878 50 60" shape-rendering="crispEdges" aria-label="Axes">
                <path d="M1720 898V917L1707 924M1720 917L1736 925" fill="none" stroke="#fff" />
                <g fill="#fff" font-family="Noto Sans, sans-serif" font-size="13"><text x="1720" y="899">z</text><text x="1702" y="928">x</text><text x="1736" y="928">y</text></g>
              </svg>
            </div>
          </div>
        </section>
      </main>

      <aside class="dock">
        <div v-for="(col, ci) in [dockA, dockB]" :key="ci" class="col">
          <div v-for="(g, gi) in col" :key="gi" class="set" :class="g.gap">
            <i class="hgrip" />
            <template v-for="(x, xi) in g.list" :key="xi">
              <hr v-if="x.n === '|'">
              <button v-else class="tool" :aria-label="x.n"><svg viewBox="0 0 22 22" v-html="x.icon" /><b v-if="x.drop" /></button>
            </template>
          </div>
        </div>
      </aside>
    </div>

    <div class="bar lower">
      <template v-for="(g, gi) in bottomA" :key="gi">
        <i class="grip" :class="{ first: gi === 0 }" />
        <button v-for="x in g" :key="x.n" class="tool" :class="{ tight: x.tight }" :aria-label="x.n"><svg viewBox="0 0 22 22" v-html="x.icon" /><b v-if="x.drop" /></button>
      </template>
      <label class="combo wide">
        <select aria-label="In work object"><option>PartBody</option></select>
        <svg class="chev" width="9" height="6"><path d="M0.500 0.500L4.500 4.500L8.500 0.500" fill="none" stroke="currentColor" /></svg>
      </label>
      <template v-for="(g, gi) in bottomB" :key="gi">
        <i class="grip" />
        <button v-for="x in g" :key="x.n" class="tool" :aria-label="x.n"><svg viewBox="0 0 22 22" v-html="x.icon" /><b v-if="x.drop" /></button>
      </template>
      <span class="grow" />
      <svg class="logo" width="42" height="34" viewBox="0 0 42 34" aria-label="CATIA">
        <path d="M9 3L17 3Q18 5 13 7Q18 7 15 12" fill="none" stroke="#e02c2c" stroke-width="2" />
        <path d="M5 13Q13 11 12 15Q10 20 3 23L7 16" fill="none" stroke="#43358c" stroke-width="2" />
        <path d="M24 11Q17 11 18 14L21 17Q21 21 15 22" fill="none" stroke="#f0980c" stroke-width="3" />
        <text x="7" y="32" font-family="Liberation Sans, sans-serif" font-size="10" font-weight="700" font-style="italic" fill="#43308c">CATIA</text>
      </svg>
    </div>

    <footer class="status">
      <span class="grow">Select an object or a command</span>
      <input type="text" aria-label="Power input">
      <button class="sb" aria-label="Dock"><svg viewBox="0 0 22 22" v-html="icons.dock" /></button>
      <button class="sb" aria-label="Information"><svg viewBox="0 0 22 22" v-html="icons.info" /></button>
    </footer>
  </div>
</template>

<style>
html, body { margin: 0; background: #cfcfe6; }
</style>

<style scoped>
.app { display: flex; flex-direction: column; height: 100vh; min-height: 600px; overflow: hidden; background: #cfcfe6; color: #000; font-family: "Open Sans", "Noto Sans", sans-serif; font-size: 11px; line-height: 16px; }
button { margin: 0; padding: 0; border: 0; background: none; color: inherit; font: inherit; }
.grow { flex: 1; }
.caption { display: flex; align-items: center; height: 23px; padding-left: 3px; background: linear-gradient(90deg, #e9f4f5, #eaf4f6 30%, #f0f3fc 55%); }
.caption .grow { padding-left: 6px; }
.ico { flex: none; }
.sys { display: flex; align-items: center; justify-content: center; width: 46px; height: 20px; margin-bottom: 3px; }
.sys:last-child { margin-right: 2px; }
.menu { display: flex; height: 19px; line-height: 19px; }
.menu a { color: #000; text-decoration: none; padding: 0 10px 0 9px; white-space: nowrap; }
.menu u { text-underline-offset: 2px; }
.menu .current { padding: 0 16px 0 2px; margin-right: -7px; background: #ffe2b4; }
.bar { display: flex; align-items: center; flex: none; box-sizing: border-box; height: 37px; padding-top: 4px; border-bottom: 1px solid #50505a; background: linear-gradient(#fff 0, #fff 2px, #eeeef8 4px, #cfcfe6 9px, #cfcfe6 27px, #8f8fa6 36px); }
.lower { height: 38px; }
.bar > .grip { flex: none; align-self: flex-start; box-sizing: border-box; width: 4px; height: 16px; margin: 1px 5px 0 10px; border: 1px solid; border-color: #fff #999 #999 #fff; border-left-width: 2px; }
.bar > .grip.first { margin-left: 7px; }
.combos { display: flex; gap: 3px; margin: 0 0 0 1px; }
.combo { position: relative; display: block; flex: none; box-sizing: border-box; width: 69px; height: 26px; border: 1px solid #88888c; border-radius: 2px; background: #fff; }
.combo select { appearance: none; display: block; width: 100%; height: 100%; padding: 0 20px 0 4px; border: 0; background: none; color: #000; font: inherit; font-size: 12px; text-overflow: clip; overflow: hidden; }
.combo.narrow { width: 47px; }
.combo.off { border-color: #ddd; color: #aaa; }
.combo.off select { color: #999; background: linear-gradient(90deg, #f0f0f0 28px, #fff 28px); opacity: 1; }
.combo.raised select { padding-bottom: 5px; padding-left: 6px; }
.combo.wide { width: 169px; margin-right: 0; }
.combo.wide select { font-size: 11px; }
.chev { position: absolute; right: 4px; top: 10px; color: #555; pointer-events: none; }
.off .chev { color: #bbb; }
.chip { position: absolute; left: 5px; top: 4px; box-sizing: border-box; width: 41px; height: 16px; border: 1px solid; border-color: #666 #ddd #ddd #666; background: #fff; }
.tool { position: relative; display: flex; align-items: center; justify-content: center; flex: none; width: 28px; height: 28px; }
.tool.tight { width: 22px; }
.tool svg { width: 22px; height: 22px; overflow: visible; shape-rendering: crispEdges; }
.tool b { position: absolute; right: 0; bottom: 0; border: 4px solid transparent; border-top-color: #000; border-bottom: 0; }
.tail { width: 98px; }
.middle { display: flex; flex: 1; min-height: 0; }
.desk { position: relative; flex: 1; min-width: 0; display: flex; box-sizing: border-box; padding: 26px 78px 15px 26px; border: 2px solid #77777f; border-right: 0; border-bottom: 0; background: #ababc1; overflow: hidden; }
.sky { position: absolute; inset: 0; width: 100%; height: 100%; }
.window { position: relative; flex: 1; min-width: 0; display: flex; flex-direction: column; box-sizing: border-box; padding: 0 7px 7px; border: 1px solid #000; border-radius: 6px 6px 0 0; background: linear-gradient(#9bb5d2, #b9d1ea 34px); box-shadow: inset -1px -1px #3fc8e0, inset 1px 1px #e4f0fa; }
.wtitle { display: flex; align-items: center; gap: 2px; height: 30px; padding: 0 0 0 2px; }
.wtitle .ico { margin-top: 8px; }
.wtitle .grow { padding: 8px 0 0 3px; white-space: nowrap; }
.wbtn { display: flex; align-items: center; justify-content: center; box-sizing: border-box; width: 32px; height: 18px; margin-top: 6px; border: 1px solid #6f8296; border-radius: 2px; background: linear-gradient(#c5d8ec 50%, #9fb6d0 50%, #b5cee6); box-shadow: inset 0 0 0 1px #dbe8f5; }
.wbtn:last-child { margin-right: 2px; }
.wbtn.red { border-color: #4e1010; background: linear-gradient(#dba090 45%, #b93c24 50%, #d0604a); box-shadow: inset 0 0 0 1px #e8b0a4; }
.client { display: flex; flex: 1; min-height: 0; border: 2px solid; border-color: #84848c #fff #fff #84848c; }
.scroll { display: flex; flex-direction: column; flex: none; width: 15px; border-right: 1px solid #30306a; background: #7b7bff; }
.scroll button { display: flex; align-items: center; justify-content: center; flex: none; height: 16px; border-bottom: 1px solid #4444a0; }
.scroll button:last-child { border-top: 1px solid #3c3c90; border-bottom: 0; }
.track { flex: 180; background: repeating-conic-gradient(#4a4a96 0 25%, #7474e4 0 50%) 0 0 / 2px 2px; border-bottom: 1px solid #c8c8ff; }
.thumb { flex: 594; }
.view { position: relative; flex: 1; min-width: 0; overflow: hidden; background: linear-gradient(#333366, #3a3a6b 33%, #464676 66%, #73739a 82%, #adadc0); }
.model { position: absolute; inset: 0; width: 100%; height: 100%; }
.lime { fill: #00ff00; }
.dim { font-family: "Noto Sans", sans-serif; font-size: 14px; fill: #003000; }
.tree { position: relative; margin: -7px 0 0; padding: 0; list-style: none; color: #fff; font-family: "Noto Sans", sans-serif; font-size: 13px; }
.tree li { display: flex; align-items: center; height: 29px; }
.guide { flex: none; overflow: visible; margin-right: 1px; }
.g0 { width: 21px; }
.g1 { width: 41px; }
.g2 { width: 62px; }
.ticon { flex: none; width: 22px; height: 22px; margin-right: 2px; position: relative; }
.label { padding: 0 2px; line-height: 20px; white-space: nowrap; background: #343464; border-radius: 2px; }
.label.hot { background: #ff8000; }
.label.under { text-decoration: underline; }
.label.sel { margin-left: -3px; padding: 0; line-height: 17px; background: #0068ff; border: 1px solid; border-color: #fff #666 #666 #fff; border-radius: 0; position: relative; }
.compass { position: absolute; top: 20px; right: 65px; }
.triad { position: absolute; bottom: 8px; right: 6px; }
.dock { display: flex; gap: 9px; flex: none; box-sizing: border-box; width: 78px; padding: 7px 2px 0 5px; border-left: 1px solid #f4f4fa; background: linear-gradient(90deg, #fff 0, #fff 3px, #cfcfe6 9px, #cfcfe6 68px, #9a9ab2 78px); }
.col { width: 30px; }
.set { margin-top: 8px; }
.set:first-child { margin-top: 0; }
.set.gap-m { margin-top: 12px; }
.set.gap-l { margin-top: 43px; }
.set.gap-xl { margin-top: 92px; }
.hgrip { display: block; box-sizing: border-box; width: 16px; height: 4px; margin-bottom: 5px; border: 1px solid; border-color: #fff #999 #999 #fff; border-top-width: 2px; }
.col .tool { margin-left: 1px; }
.col hr { height: 1px; margin: 2px 0; border: 0; background: #fff; border-bottom: 1px solid #999; }
.logo { flex: none; margin: -2px 6px 0 0; }
.status { display: flex; align-items: center; flex: none; height: 24px; padding-left: 3px; }
.status input { box-sizing: border-box; width: 300px; height: 21px; margin-bottom: 2px; padding: 0 4px; border: 1px solid; border-color: #777 #fff #999 #aaa; background: #fff; font: inherit; }
.sb { display: flex; align-items: center; justify-content: center; box-sizing: border-box; width: 34px; height: 21px; margin-bottom: 2px; border: 1px solid; border-width: 1px 2px 2px 1px; border-color: #fff #77777f #77777f #fff; }
.sb svg { width: 18px; height: 18px; }
</style>
